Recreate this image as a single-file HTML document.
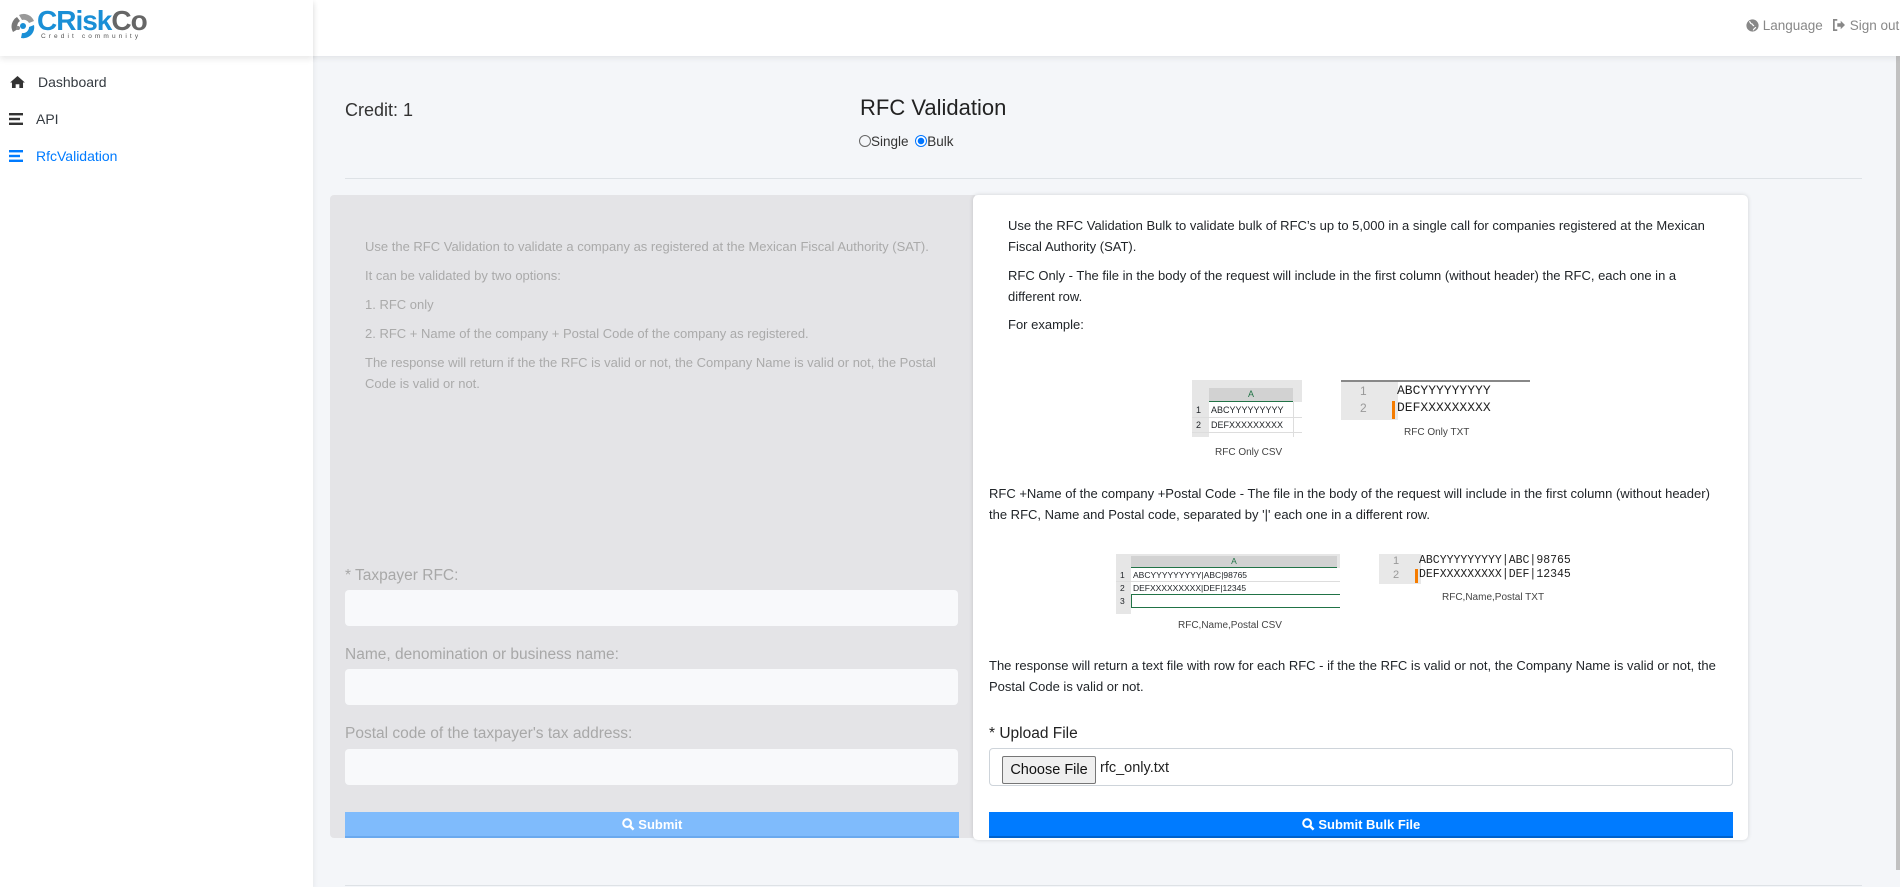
<!DOCTYPE html>
<html><head><meta charset="utf-8">
<style>
*{box-sizing:border-box;margin:0;padding:0}
body{width:1900px;height:887px;overflow:hidden;background:#f4f6f9;font-family:"Liberation Sans",sans-serif;position:relative;color:#212529}
.abs{position:absolute}
#hdr{left:0;top:0;width:1900px;height:56px;background:#fff;box-shadow:0 2px 6px rgba(0,0,0,.08);z-index:3}
#side{left:0;top:0;width:313px;height:887px;background:#fff;z-index:4;box-shadow:0 2px 6px rgba(0,0,0,.08)}
#logoBar{position:absolute;left:0;top:0;width:313px;height:56px;box-shadow:0 3px 6px rgba(0,0,0,.09)}
.nav{position:absolute;font-size:14px;color:#343a40;white-space:nowrap}
.lt{color:#aaa;font-size:13px;white-space:nowrap}
.rt{font-size:13px;color:#212529;white-space:nowrap;line-height:21px}
.inp{position:absolute;left:345px;width:613px;height:36px;background:#f8f9fb;border-radius:4px}
.lab{position:absolute;left:345px;font-size:15.5px;color:#a8a8a8}
.btn{position:absolute;height:26px;color:#fff;font-size:13px;text-align:center;line-height:25px;font-weight:bold}
.cap{position:absolute;font-size:10px;color:#444;white-space:nowrap}
.mono{font-family:"Liberation Mono",monospace;color:#222}
</style></head><body>
<div id="hdr" class="abs">
  <div class="abs" style="left:1746px;top:18px;font-size:13.5px;color:#888;white-space:nowrap">
    <svg width="13" height="13" viewBox="0 0 16 16" style="vertical-align:-2px"><circle cx="8" cy="8" r="7.5" fill="#888"/><path d="M4 3c2 1 1 3 3 3s1 3 3 2M9 14c0-2 2-2 3-4" stroke="#fff" stroke-width="1.5" fill="none"/></svg> Language
  </div>
  <div class="abs" style="left:1832px;top:18px;font-size:13.5px;color:#888;white-space:nowrap">
    <svg width="14" height="12" viewBox="0 0 16 14" style="vertical-align:-1px"><path d="M6 1H2v12h4" stroke="#888" stroke-width="2" fill="none"/><path d="M6 5h4V2l5 5-5 5V9H6z" fill="#888"/></svg> Sign out
  </div>
</div>
<div id="side" class="abs">
  <div id="logoBar">
    <svg class="abs" style="left:9px;top:12px" width="28" height="28" viewBox="0 0 28 28">
      <path d="M4 20a11 11 0 0 1 4-15l3 4a6 6 0 0 0-2 8z" fill="#777"/>
      <path d="M10 3a11 11 0 0 1 15 6l-5 2a6 6 0 0 0-7-3z" fill="#999"/>
      <path d="M25 13a11 11 0 0 1-13 13l1-5a6 6 0 0 0 7-6z" fill="#1a8fd6"/>
      <circle cx="14" cy="14" r="3" fill="#1a8fd6"/><circle cx="9" cy="16" r="2" fill="#888"/>
    </svg>
    <div class="abs" style="left:37px;top:5px;font-size:28px;font-weight:bold;letter-spacing:-1px;white-space:nowrap"><span style="color:#1a8fd6">CRisk</span><span style="color:#666">Co</span></div>
    <div class="abs" style="left:41px;top:33px;font-size:6.5px;letter-spacing:3.1px;color:#555;white-space:nowrap">Credit community</div>
  </div>
  <svg class="abs" style="left:10px;top:76px" width="15" height="12" viewBox="0 0 16 13"><path d="M8 0L0 7h2v6h4V9h4v4h4V7h2z" fill="#333"/></svg>
  <div class="nav" style="left:38px;top:74px">Dashboard</div>
  <svg class="abs" style="left:9px;top:113px" width="14" height="12" viewBox="0 0 14 12"><rect y="0" width="14" height="2.4" fill="#333"/><rect y="4.8" width="11" height="2.4" fill="#333"/><rect y="9.6" width="14" height="2.4" fill="#333"/></svg>
  <div class="nav" style="left:36px;top:111px">API</div>
  <svg class="abs" style="left:9px;top:150px" width="14" height="12" viewBox="0 0 14 12"><rect y="0" width="14" height="2.4" fill="#007bff"/><rect y="4.8" width="11" height="2.4" fill="#007bff"/><rect y="9.6" width="14" height="2.4" fill="#007bff"/></svg>
  <div class="nav" style="left:36px;top:148px;color:#007bff">RfcValidation</div>
</div>
<div class="abs" style="left:1896px;top:56px;width:4px;height:814px;background:#c1c1c1"></div>

<div class="abs" style="left:345px;top:100px;font-size:18px;color:#333">Credit: 1</div>
<div class="abs" style="left:860px;top:95px;font-size:22px;color:#222;white-space:nowrap">RFC Validation</div>
<div class="abs" style="left:859px;top:134px;font-size:13.5px;color:#333;white-space:nowrap">
  <span style="display:inline-block;width:12px;height:12px;border:1px solid #666;border-radius:50%;vertical-align:-1px"></span>Single
  <span style="display:inline-block;width:12px;height:12px;border:1px solid #0075ff;border-radius:50%;vertical-align:-1px;margin-left:3px;background:radial-gradient(#0075ff 3px,#fff 3.5px)"></span>Bulk
</div>
<div class="abs" style="left:345px;top:178px;width:1517px;height:1px;background:#dee2e6"></div>
<div class="abs" style="left:345px;top:885px;width:1517px;height:1px;background:#dee2e6"></div>

<!-- left panel -->
<div class="abs" style="left:330px;top:195px;width:645px;height:643px;background:#e4e4e7;border-radius:4px 0 0 4px"></div>
<div class="abs lt" style="left:365px;top:239px">Use the RFC Validation to validate a company as registered at the Mexican Fiscal Authority (SAT).</div>
<div class="abs lt" style="left:365px;top:268px">It can be validated by two options:</div>
<div class="abs lt" style="left:365px;top:297px">1. RFC only</div>
<div class="abs lt" style="left:365px;top:326px">2. RFC + Name of the company + Postal Code of the company as registered.</div>
<div class="abs lt" style="left:365px;top:355px">The response will return if the the RFC is valid or not, the Company Name is valid or not, the Postal</div>
<div class="abs lt" style="left:365px;top:376px">Code is valid or not.</div>
<div class="lab" style="top:567px">* Taxpayer RFC:</div>
<div class="inp" style="top:590px"></div>
<div class="lab" style="top:646px">Name, denomination or business name:</div>
<div class="inp" style="top:669px"></div>
<div class="lab" style="top:725px">Postal code of the taxpayer's tax address:</div>
<div class="inp" style="top:749px"></div>
<div class="btn" style="left:345px;top:812px;width:614px;background:#7fbbfc;border-bottom:2px solid #6aa9ee">
  <svg width="13" height="13" viewBox="0 0 14 14" style="vertical-align:-2px"><circle cx="5.5" cy="5.5" r="4.2" stroke="#fff" stroke-width="2.2" fill="none"/><path d="M8.5 8.5l4 4" stroke="#fff" stroke-width="2.6"/></svg> Submit</div>

<!-- right panel -->
<div class="abs" style="left:973px;top:195px;width:775px;height:645px;background:#fff;border-radius:5px;box-shadow:0 0 4px rgba(0,0,0,.15)"></div>
<div class="abs rt" style="left:1008px;top:215px">Use the RFC Validation Bulk to validate bulk of RFC’s up to 5,000 in a single call for companies registered at the Mexican<br>Fiscal Authority (SAT).</div>
<div class="abs rt" style="left:1008px;top:265px">RFC Only - The file in the body of the request will include in the first column (without header) the RFC, each one in a<br>different row.</div>
<div class="abs rt" style="left:1008px;top:314px">For example:</div>

<!-- csv1 -->
<div class="abs" style="left:1192px;top:380px;width:110px;height:57px;background:#fff;overflow:hidden;font-size:9px">
  <div class="abs" style="left:0;top:0;width:110px;height:22px;background:#e6e6e6"></div>
  <div class="abs" style="left:17px;top:8px;width:84px;height:14px;background:#d2d2d2;border-bottom:1px solid #217346;text-align:center;color:#217346;line-height:13px">A</div>
  <div class="abs" style="left:0;top:22px;width:17px;height:40px;background:#e6e6e6"></div>
  <div class="abs" style="left:4px;top:25px">1</div><div class="abs" style="left:4px;top:40px">2</div>
  <div class="abs" style="left:19px;top:25px">ABCYYYYYYYYY</div><div class="abs" style="left:19px;top:40px">DEFXXXXXXXXX</div>
  <div class="abs" style="left:0;top:37px;width:110px;height:1px;background:#ddd"></div>
  <div class="abs" style="left:0;top:52px;width:110px;height:1px;background:#ddd"></div>
  <div class="abs" style="left:101px;top:22px;width:1px;height:40px;background:#ddd"></div>
</div>
<div class="cap" style="left:1215px;top:447px">RFC Only CSV</div>
<!-- txt1 -->
<div class="abs" style="left:1341px;top:380px;width:189px;height:40px;background:#fff;border-top:2px solid #888">
  <div class="abs" style="left:0;top:0;width:57px;height:38px;background:#e8e8e8"></div>
  <div class="abs" style="left:19px;top:2px;font-size:12px;color:#999">1</div>
  <div class="abs" style="left:19px;top:19px;font-size:12px;color:#999">2</div>
  <div class="abs" style="left:51px;top:19px;width:3px;height:18px;background:#f57c00"></div>
  <div class="abs mono" style="left:56px;top:1px;font-size:13px">ABCYYYYYYYYY</div>
  <div class="abs mono" style="left:56px;top:18px;font-size:13px">DEFXXXXXXXXX</div>
</div>
<div class="cap" style="left:1404px;top:427px">RFC Only TXT</div>

<div class="abs rt" style="left:989px;top:483px">RFC +Name of the company +Postal Code - The file in the body of the request will include in the first column (without header)<br>the RFC, Name and Postal code, separated by '|' each one in a different row.</div>

<!-- csv2 -->
<div class="abs" style="left:1116px;top:554px;width:224px;height:60px;background:#fff;overflow:hidden;font-size:8.5px">
  <div class="abs" style="left:0;top:0;width:224px;height:14px;background:#e6e6e6"></div>
  <div class="abs" style="left:15px;top:2px;width:206px;height:12px;background:#d2d2d2;border-bottom:1px solid #217346;text-align:center;color:#217346;line-height:11px">A</div>
  <div class="abs" style="left:0;top:14px;width:15px;height:46px;background:#e6e6e6"></div>
  <div class="abs" style="left:4px;top:16px">1</div><div class="abs" style="left:4px;top:29px">2</div><div class="abs" style="left:4px;top:42px">3</div>
  <div class="abs" style="left:17px;top:16px">ABCYYYYYYYYY|ABC|98765</div><div class="abs" style="left:17px;top:29px">DEFXXXXXXXXX|DEF|12345</div>
  <div class="abs" style="left:0;top:27px;width:224px;height:1px;background:#ddd"></div>
  <div class="abs" style="left:15px;top:40px;width:218px;height:14px;border:1px solid #217346"></div>
</div>
<div class="cap" style="left:1178px;top:620px">RFC,Name,Postal CSV</div>
<!-- txt2 -->
<div class="abs" style="left:1379px;top:554px;width:197px;height:30px;background:#fff">
  <div class="abs" style="left:0;top:0;width:42px;height:30px;background:#e8e8e8"></div>
  <div class="abs" style="left:14px;top:1px;font-size:11px;color:#999">1</div>
  <div class="abs" style="left:14px;top:15px;font-size:11px;color:#999">2</div>
  <div class="abs" style="left:36px;top:15px;width:3px;height:14px;background:#f57c00"></div>
  <div class="abs mono" style="left:40px;top:0px;font-size:11.5px">ABCYYYYYYYYY|ABC|98765</div>
  <div class="abs mono" style="left:40px;top:14px;font-size:11.5px">DEFXXXXXXXXX|DEF|12345</div>
</div>
<div class="cap" style="left:1442px;top:592px">RFC,Name,Postal TXT</div>

<div class="abs rt" style="left:989px;top:655px">The response will return a text file with row for each RFC - if the the RFC is valid or not, the Company Name is valid or not, the<br>Postal Code is valid or not.</div>

<div class="abs" style="left:989px;top:725px;font-size:15.5px;color:#222;white-space:nowrap">* Upload File</div>
<div class="abs" style="left:989px;top:748px;width:744px;height:38px;border:1px solid #ced4da;border-radius:4px;background:#fff">
  <div class="abs" style="left:12px;top:7px;width:94px;height:28px;background:#efefef;border:1px solid #767676;border-radius:2px;font-size:14.5px;line-height:26px;text-align:center;color:#111">Choose File</div>
  <div class="abs" style="left:110px;top:11px;font-size:14.5px;color:#222">rfc_only.txt</div>
</div>
<div class="btn" style="left:989px;top:812px;width:744px;background:#007bff;border-bottom:2px solid #0062cc">
  <svg width="13" height="13" viewBox="0 0 14 14" style="vertical-align:-2px"><circle cx="5.5" cy="5.5" r="4.2" stroke="#fff" stroke-width="2.2" fill="none"/><path d="M8.5 8.5l4 4" stroke="#fff" stroke-width="2.6"/></svg> Submit Bulk File</div>
</body></html>
